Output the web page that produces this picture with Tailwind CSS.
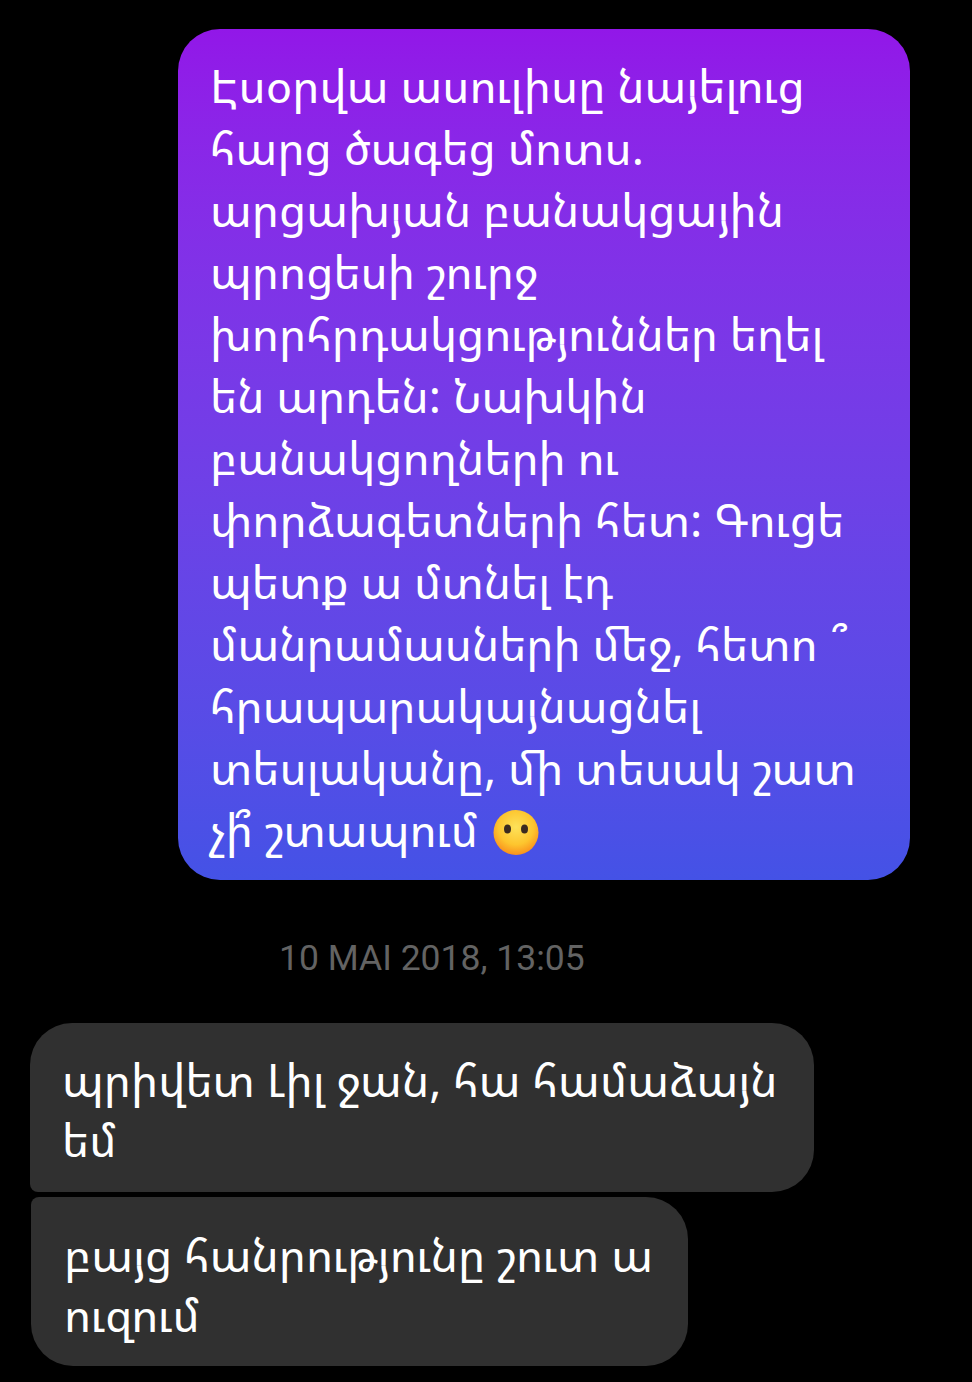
<!DOCTYPE html>
<html lang="hy">
<head>
    <meta charset="UTF-8">
    <title>Messages</title>
    <script src="https://cdn.jsdelivr.net/npm/@tailwindcss/browser@4"></script>
</head>
<body class="bg-black w-[972px] h-[1382px] overflow-hidden font-['Noto_Sans_Armenian','DejaVu_Sans',sans-serif]">
    <div class="flex flex-col pt-[29px]">
        <!-- outgoing message -->
        <div class="ml-[178px] w-[732px] h-[851px] rounded-[42px] bg-gradient-to-b from-[#9217e8] to-[#4452e6] pl-[32px] pt-[25px] text-white text-[45.5px] leading-[62px] whitespace-nowrap">
            <p>Էսօրվա ասուլիսը նայելուց</p>
            <p>հարց ծագեց մոտս.</p>
            <p>արցախյան բանակցային</p>
            <p>պրոցեսի շուրջ</p>
            <p>խորհրդակցություններ եղել</p>
            <p>են արդեն: Նախկին</p>
            <p>բանակցողների ու</p>
            <p>փորձագետների հետ: Գուցե</p>
            <p>պետք ա մտնել էդ</p>
            <p>մանրամասների մեջ, հետո ՞</p>
            <p>հրապարակայնացնել</p>
            <p>տեսլականը, մի տեսակ շատ</p>
            <p class="flex items-center gap-[15px]">չի՞ շտապում
                <svg class="mt-[6px]" width="47" height="47" viewBox="0 0 47 47">
                    <defs>
                        <radialGradient id="face" cx="0.5" cy="0.38" r="0.65">
                            <stop offset="0" stop-color="#fde25a"/>
                            <stop offset="0.6" stop-color="#fdc52e"/>
                            <stop offset="1" stop-color="#f98a1a"/>
                        </radialGradient>
                    </defs>
                    <circle cx="23" cy="23.5" r="22.5" fill="url(#face)"/>
                    <ellipse cx="14.5" cy="20" rx="3.5" ry="4.5" fill="#3a2a20"/>
                    <ellipse cx="31.5" cy="20" rx="3.5" ry="4.5" fill="#3a2a20"/>
                </svg>
            </p>
        </div>

        <p class="mt-[58px] ml-[279px] text-[35.5px] leading-[40px] text-[#636363] font-['Roboto',sans-serif]">10 MAI 2018, 13:05</p>

        <!-- incoming messages -->
        <div class="mt-[45px] ml-[30px] w-[784px] h-[169px] rounded-[42px] rounded-bl-[8px] bg-[#303030] pl-[32px] pt-[26px] text-white text-[45.5px] leading-[60px] whitespace-nowrap">
            <p>պրիվետ Լիլ ջան, հա համաձայն</p>
            <p>եմ</p>
        </div>
        <div class="mt-[5px] ml-[31px] w-[657px] h-[169px] rounded-[42px] rounded-tl-[8px] bg-[#303030] pl-[33px] pt-[27px] text-white text-[45.5px] leading-[60px] whitespace-nowrap">
            <p>բայց հանրությունը շուտ ա</p>
            <p>ուզում</p>
        </div>
    </div>
</body>
</html>
